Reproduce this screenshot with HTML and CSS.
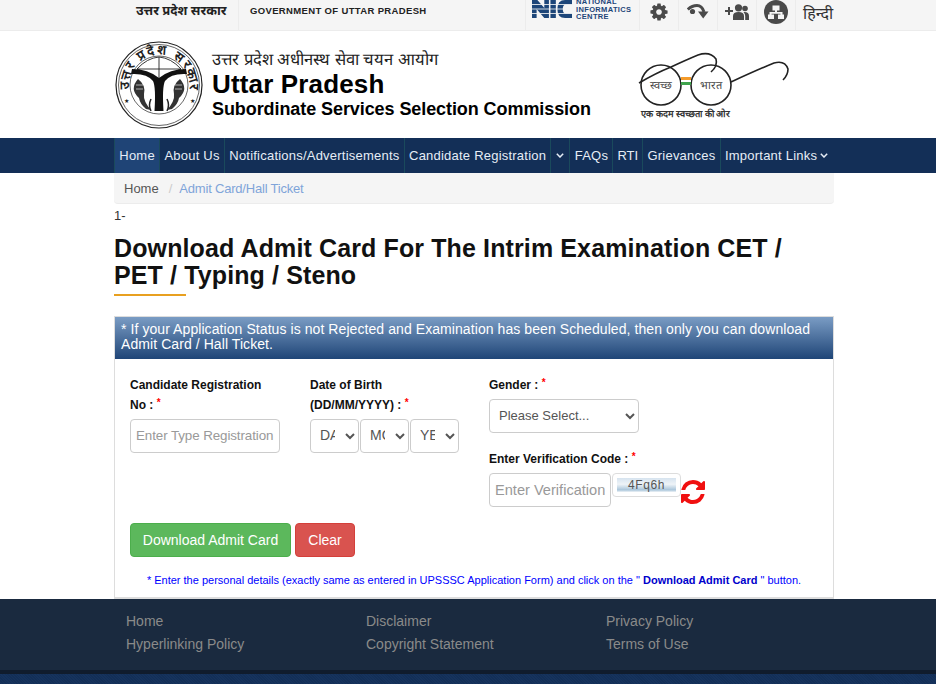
FILE: index.html
```html
<!DOCTYPE html>
<html lang="en">
<head>
<meta charset="utf-8">
<title>Download Admit Card</title>
<link rel="stylesheet" href="styles.css">
</head>
<body>
<div class="topbar">
  <div class="wrap topbar-in">
    <div class="gov">
      <span class="gov-hi">उत्तर प्रदेश सरकार</span>
      <span class="gov-en">GOVERNMENT OF UTTAR PRADESH</span>
    </div>
    <div class="tools">
      <div class="nic">
        <svg class="nic-mark" viewBox="0 0 52 20" width="40" height="18" preserveAspectRatio="none">
          <path class="nic-fill" d="M0 0h7l9 9V0h6v20h-6L6 10v10H0zM24 0h7v20h-7zM52 0H43q-10 0-10 10t10 10h9v-5H44q-4 0-4-5t4-5h8z"/>
          <path class="nic-cut" d="M0 5h52M0 10h52M0 15h52"/>
        </svg>
        <span class="nic-text">NATIONAL<br>INFORMATICS<br>CENTRE</span>
      </div>
      <div class="tool"><svg width="20" height="20" viewBox="0 0 1792 1792"><path class="ico" d="M1152 896q0-106-75-181t-181-75-181 75-75 181 75 181 181 75 181-75 75-181zm512-109v222q0 12-8 23t-20 13l-185 28q-19 54-39 91 35 50 107 138 10 12 10 25t-9 23q-27 37-99 108t-94 71q-12 0-26-9l-138-108q-44 23-91 38-16 136-29 186-7 28-36 28h-222q-14 0-24.5-8.5t-11.5-21.5l-28-184q-49-16-90-37l-141 107q-10 9-25 9-14 0-25-11-126-114-165-168-7-10-7-23 0-12 8-23 15-21 51-66.5t54-70.5q-27-50-41-99l-183-27q-13-2-21-12.5t-8-23.5v-222q0-12 8-23t19-13l186-28q14-46 39-92-40-57-107-138-10-12-10-24 0-10 9-23 26-36 98.5-107.5t94.5-71.5q13 0 26 10l138 107q44-23 91-38 16-136 29-186 7-28 36-28h222q14 0 24.5 8.5t11.5 21.5l28 184q49 16 90 37l142-107q9-9 24-9 13 0 25 10 129 119 165 170 7 8 7 22 0 12-8 23-15 21-51 66.5t-54 70.5q26 50 41 98l183 28q13 2 21 12.5t8 23.5z"/></svg></div>
      <div class="tool"><svg width="22" height="16" viewBox="0 0 22 16"><circle class="ico" cx="5.500" cy="7.500" r="2.600"/><path class="ico-line" d="M.8 5.500Q5 1.500 10 1.500t7 6.500"/><path class="ico" d="M11 7.500h10.500l-5.300 7z"/></svg></div>
      <div class="tool"><svg width="24" height="16" viewBox="0 0 24 16"><path class="ico" d="M3 6V3h2v3h3v2H5v3H3V8H0V6z"/><circle class="ico" cx="13.500" cy="3.800" r="3.600"/><circle class="ico" cx="20" cy="4.500" r="2.800"/><path class="ico" d="M8 16v-4q0-4 5.500-4t5.500 4v4zM19.500 8q4.500 0 4.500 4v4h-3.800v-4q0-2-1.700-4z"/></svg></div>
      <div class="tool"><svg width="24" height="24" viewBox="0 0 24 24"><circle class="ico" cx="12" cy="12" r="12"/><path class="ico-white" d="M8.500 5.500h7v5H13V12h5.500v2.500H20V19h-6v-4.500h2.500V13.800h-9v.7H10V19H4v-4.500h1.500V12H11v-1.500H8.500z"/></svg></div>
      <div class="tool lang">हिन्दी</div>
    </div>
  </div>
</div>

<header class="wrap brand">
  <svg class="emblem" viewBox="0 0 88 88" width="88" height="88">
    <defs><path id="arc" d="M14.500 52A30.500 30.500 0 1 1 73.500 52"/></defs>
    <circle class="ring" cx="44" cy="44" r="43"/>
    <circle class="ring thin" cx="44" cy="44" r="40.500"/>
    <circle class="ring thin" cx="44" cy="44" r="29"/>
    <text class="emblem-text"><textPath href="#arc" startOffset="50%" text-anchor="middle" textLength="104" lengthAdjust="spacing">उत्तर प्रदेश सरकार</textPath></text>
    <path class="bow" d="M22 28Q32 17 44 16Q56 17 66 28M44 16V38M22 28L44 38L66 28M22 28H66"/>
    <path class="ytrunk" d="M16 33Q32 32 38 40Q41 46 39.500 70H48.500Q47 46 50 40Q56 32 72 33L71 28Q55 28 44 37Q33 28 17 28Z"/>
    <path class="fish" d="M23 38Q31 44 29 53Q28 60 36 69L31 68Q25 63 24 57Q14 48 23 38ZM65 38Q57 44 59 53Q60 60 52 69L57 68Q63 63 64 57Q74 48 65 38Z"/>
    <path class="fishline" d="M21 44H28M21 48H28M60 44H67M60 48H67"/>
    <path class="reed" d="M36 70Q33 64 36 58M52 70Q55 64 52 58"/>
    <text class="star" x="9" y="62">★</text>
    <text class="star" x="75" y="62">★</text>
  </svg>
  <div class="title">
    <div class="title-hi">उत्तर प्रदेश अधीनस्थ सेवा चयन आयोग</div>
    <div class="title-main">Uttar Pradesh</div>
    <div class="title-sub">Subordinate Services Selection Commission</div>
  </div>
  <svg class="swachh" viewBox="0 0 160 74" width="160" height="74">
    <circle class="gl" cx="29" cy="39" r="20"/>
    <circle class="gl" cx="79" cy="39" r="20"/>
    <path class="gl" d="M7 37Q24 27 39 21Q54 14 66 9Q78 5 84 13Q86 20 79 26"/>
    <path class="gl" d="M99 36Q125 24 142 17Q153 14 156 23Q156 29 151 34"/>
    <rect class="st o" x="49" y="31" width="10" height="3"/>
    <rect class="st w" x="49" y="34" width="10" height="2"/>
    <rect class="st g" x="49" y="36" width="10" height="3"/>
    <text class="sw-text" x="29" y="43" text-anchor="middle">स्वच्छ</text>
    <text class="sw-text" x="79" y="43" text-anchor="middle">भारत</text>
    <text class="sw-small" x="9" y="71">एक कदम स्वच्छता की ओर</text>
  </svg>
</header>

<nav class="nav">
  <div class="wrap nav-in">
    <a class="nav-item active">Home</a>
    <a class="nav-item">About Us</a>
    <a class="nav-item">Notifications/Advertisements</a>
    <a class="nav-item">Candidate Registration</a>
    <a class="nav-item caret-only"><svg class="chev" viewBox="0 0 8 5" width="8" height="5"><path d="M.8.8 4 4l3.200-3.200"/></svg></a>
    <a class="nav-item">FAQs</a>
    <a class="nav-item rti">RTI</a>
    <a class="nav-item">Grievances</a>
    <a class="nav-item">Important Links <svg class="chev" viewBox="0 0 8 5" width="8" height="5"><path d="M.8.8 4 4l3.200-3.200"/></svg></a>
  </div>
</nav>

<main class="wrap">
  <div class="crumb"><a class="crumb-home">Home</a><span class="crumb-sep">/</span><a class="crumb-cur">Admit Card/Hall Ticket</a></div>
  <div class="num">1-</div>
  <h1 class="page-title">Download Admit Card For The Intrim Examination CET / PET / Typing / Steno</h1>
  <div class="rule"></div>

  <section class="panel">
    <div class="panel-head">* If your Application Status is not Rejected and Examination has been Scheduled, then only you can download Admit Card / Hall Ticket.</div>
    <div class="panel-body">
      <form class="grid">
        <div class="col">
          <label class="lab">Candidate Registration No : <sup class="req">*</sup></label>
          <input class="ctl reg" type="text" placeholder="Enter Type Registration">
        </div>
        <div class="col">
          <label class="lab">Date of Birth (DD/MM/YYYY) : <sup class="req">*</sup></label>
          <div class="dob">
            <select class="ctl sel"><option>DAY</option></select>
            <select class="ctl sel"><option>MONTH</option></select>
            <select class="ctl sel"><option>YEAR</option></select>
          </div>
        </div>
        <div class="col">
          <label class="lab one">Gender : <sup class="req">*</sup></label>
          <select class="ctl gender"><option>Please Select...</option></select>
          <label class="lab one code-lab">Enter Verification Code : <sup class="req">*</sup></label>
          <div class="code">
            <input class="ctl ver" type="text" placeholder="Enter Verification">
            <div class="captcha"><span class="captcha-img">4Fq6h</span></div>
            <svg class="refresh" viewBox="0 0 1536 1536" width="24" height="24"><path d="M1511 928q0 5-1 7-64 268-268 434.500t-478 166.500q-146 0-282.500-55t-243.500-157l-129 129q-19 19-45 19t-45-19-19-45v-448q0-26 19-45t45-19h448q26 0 45 19t19 45-19 45l-137 137q71 66 161 102t187 36q134 0 250-65t186-179q11-17 53-117 8-23 30-23h192q13 0 22.500 9.500t9.500 22.500zm25-800v448q0 26-19 45t-45 19h-448q-26 0-45-19t-19-45 19-45l138-138q-148-137-349-137-134 0-250 65t-186 179q-11 17-53 117-8 23-30 23h-199q-13 0-22.500-9.500t-9.500-22.500v-7q65-268 270-434.500t480-166.500q146 0 284 55.500t245 156.500l130-129q19-19 45-19t45 19 19 45z"/></svg>
          </div>
        </div>
      </form>
      <div class="actions">
        <button class="btn ok" type="button">Download Admit Card</button>
        <button class="btn no" type="button">Clear</button>
      </div>
      <p class="note">* Enter the personal details (exactly same as entered in UPSSSC Application Form) and click on the " <b class="note-b">Download Admit Card</b> " button.</p>
    </div>
  </section>
</main>

<footer class="foot">
  <div class="wrap foot-grid">
    <a class="foot-link">Home</a><a class="foot-link">Disclaimer</a><a class="foot-link">Privacy Policy</a>
    <a class="foot-link">Hyperlinking Policy</a><a class="foot-link">Copyright Statement</a><a class="foot-link">Terms of Use</a>
  </div>
</footer>
<div class="foot-line"></div>
<div class="foot-bottom"></div>
</body>
</html>
```
FILE: styles.css
```css
* { box-sizing: border-box; }
html, body { margin: 0; height: 684px; overflow: hidden; }
body { font-family: "Liberation Sans", Arial, sans-serif; font-size: 14px; color: #333; background: #fff; }
.wrap { width: 720px; margin-left: 114px; }

.topbar { height: 31px; background: #f5f5f5; border-bottom: 1px solid #ececec; overflow: hidden; }
.topbar-in { display: flex; justify-content: space-between; height: 30px; }
.gov { display: flex; align-items: flex-start; padding-left: 22px; }
.gov-hi { font-size: 13px; font-weight: 700; color: #222; padding-right: 10px; height: 30px; line-height: 21px; border-right: 1px solid #ececec; font-family: "Noto Sans", "Liberation Sans", sans-serif; width: 103px; white-space: nowrap; }
.gov-en { font-size: 9.500px; line-height: 22px; font-weight: 700; color: #222; padding-left: 11px; letter-spacing: .35px; }
.tools { display: flex; }
.nic { width: 114px; display: flex; align-items: flex-start; padding-left: 6px; gap: 4px; border-left: 1px solid #ececec; }
.nic-mark { flex: none; }
.nic-fill { fill: #1d4679; }
.nic-cut { stroke: #f5f5f5; stroke-width: 1; fill: none; }
.nic-text { font-size: 7.500px; line-height: 7.500px; font-weight: 700; color: #1d4679; letter-spacing: .35px; margin-top: -2px; }
.tool { width: 39px; height: 30px; display: flex; align-items: center; justify-content: center; border-left: 1px solid #ececec; padding-bottom: 6px; }
.ico { fill: #4a4a4a; }
.ico-line { fill: none; stroke: #4a4a4a; stroke-width: 3; }
.ico-white { fill: #f5f5f5; }
.lang { font-size: 16px; color: #333; font-family: "Noto Sans", "Liberation Sans", sans-serif; width: 39px; justify-content: flex-start; padding-left: 7px; padding-bottom: 4px; white-space: nowrap; }

.brand { height: 107px; display: flex; align-items: flex-start; }
.emblem { margin: 10px 0 0 1px; flex: none; }
.ring { fill: none; stroke: #222; stroke-width: 1.200; }
.ring.thin { stroke-width: .7; }
.emblem-text { font-size: 13px; font-weight: 700; fill: #222; }
.bow { fill: none; stroke: #222; stroke-width: .9; }
.ytrunk { fill: #111; }
.fish { fill: #333; }
.fishline { stroke: #fff; stroke-width: .6; fill: none; }
.reed { stroke: #222; stroke-width: 1.500; fill: none; }
.star { font-size: 6px; fill: #222; }
.title { margin-left: 9px; color: #000; padding-top: 20px; width: 420px; flex: none; }
.title-hi { font-size: 16.600px; line-height: 18px; color: #222; white-space: nowrap; }
.title-main { font-size: 26px; font-weight: 700; line-height: 30px; letter-spacing: .15px; white-space: nowrap; }
.title-sub { font-size: 18px; font-weight: 700; line-height: 20px; letter-spacing: -.08px; white-space: nowrap; }
.swachh { margin-top: 15px; flex: none; }
.gl { fill: none; stroke: #222; stroke-width: 1.600; }
.st.o { fill: #f49b2a; } .st.w { fill: #fff; } .st.g { fill: #3fa34d; }
.sw-text { font-size: 11px; fill: #444; }
.sw-small { font-size: 9.300px; fill: #333; font-weight: 700; }

.nav { height: 35px; background: #132f57; }
.nav-in { display: flex; height: 35px; }
.nav-item { display: flex; align-items: center; gap: 3px; padding: 0 4.300px; font-size: 13px; color: #e6edf6; border-left: 1px solid #1a4a5c; white-space: nowrap; letter-spacing: .22px; }
.active { background: #1f4476; }
.caret-only { padding: 0 5px; }
.rti { letter-spacing: 0; padding: 0 4px; }
.chev { fill: none; stroke: #e6edf6; stroke-width: 1.500; flex: none; }

.crumb { height: 31px; background: #f5f5f5; border-radius: 0 0 4px 4px; border-bottom: 1px solid #ececec; display: flex; align-items: center; padding-left: 10px; font-size: 13px; }
.crumb-home { color: #555; }
.crumb-sep { color: #ccc; padding: 0 7px 0 10px; }
.crumb-cur { color: #7fa4d9; letter-spacing: -.2px; }
.num { font-size: 13px; color: #333; line-height: 14px; padding-top: 5px; }
.page-title { font-size: 25px; line-height: 27px; font-weight: 700; color: #111; margin: 12px 0 0; letter-spacing: .12px; }
.rule { width: 72px; height: 2px; background: #e8a020; margin-top: 5px; }

.panel { margin-top: 20px; border: 1px solid #ddd; border-bottom-width: 2px; height: 283px; }
.panel-head { height: 42px; padding: 5px 6px 0; background: linear-gradient(#7a9cc4, #1f4577); color: #fff; font-size: 14px; line-height: 15px; letter-spacing: .075px; }
.panel-body { padding: 0 15px; }
.grid { display: grid; grid-template-columns: 180px 179px 1fr; height: 164px; padding-top: 16px; }
.col { display: flex; flex-direction: column; align-items: flex-start; }
.lab { display: block; width: 150px; font-size: 12px; font-weight: 700; line-height: 20px; color: #111; height: 44px; }
.lab.one { white-space: nowrap; width: auto; height: 16px; margin-bottom: 8px; }
.lab.code-lab { margin-top: 16px; margin-bottom: 8px; }
.req { color: #f00; font-size: 10px; line-height: 0; font-weight: 700; vertical-align: 3px; }
.ctl { height: 34px; border: 1px solid #ccc; border-radius: 4px; background: #fff; color: #555; font-family: "Liberation Sans", Arial, sans-serif; font-size: 13px; }
.reg { width: 150px; padding: 0 5px 2px; font-size: 13.400px; letter-spacing: -.1px; }
.ctl::placeholder { color: #999; opacity: 1; }
.dob { display: flex; gap: 1px; }
.sel { width: 49px; padding: 5px 7px 7px 5px; font-size: 14px; }
.gender { width: 150px; padding: 5px 5px 7px; }
.code { display: flex; align-items: flex-start; }
.ver { width: 122px; padding: 0 5px; font-size: 14.600px; }
.captcha { width: 69px; height: 24px; border: 1px solid #ddd; border-radius: 4px; padding: 4px; margin-left: 1px; background: #fff; flex: none; }
.captcha-img { display: block; height: 14px; line-height: 14px; text-align: center; font-size: 12px; color: #555; letter-spacing: .6px; background: linear-gradient(#d6e3ef, #eef3f7 45%, #a9c5da 85%, #eef3f7); }
.refresh { fill: #f01010; margin-top: 7px; flex: none; }

.actions { display: flex; gap: 4px; }
.btn { height: 34px; border-radius: 4px; border: 1px solid; color: #fff; font-family: "Liberation Sans", Arial, sans-serif; font-size: 14px; padding: 0; white-space: nowrap; }
.ok { width: 161px; background: #5cb85c; border-color: #4cae4c; }
.no { width: 60px; background: #d9534f; border-color: #d43f3a; }
.note { margin: 17px 0 0; font-size: 11px; line-height: 13px; color: #00f; text-align: center; white-space: nowrap; }
.note-b { color: #00c; }

.foot { height: 71px; background: #1a2a3f; }
.foot-grid { display: grid; grid-template-columns: repeat(3, 240px); padding: 11px 0 0 12px; grid-auto-rows: 23px; }
.foot-link { color: #8a8a8a; font-size: 14px; line-height: 23px; }
.foot-line { height: 4px; background: #101c2d; }
.foot-bottom { height: 10px; background: repeating-linear-gradient(45deg, #132f57 0 1px, #16335d 1px 2px); }
```
